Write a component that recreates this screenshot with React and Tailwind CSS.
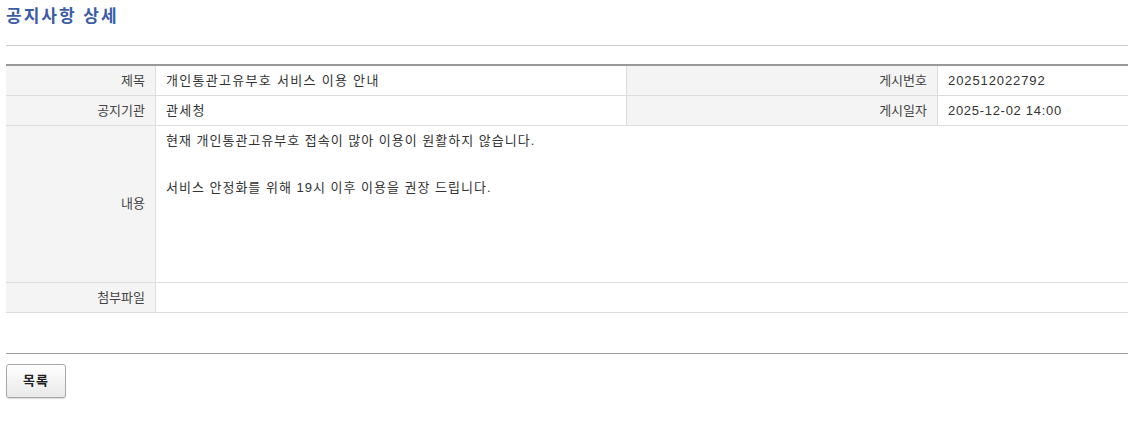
import React from 'react';

const font = { fontFamily: '"Liberation Sans", "Noto Sans CJK KR", sans-serif' };

const Label = ({ children, className = '' }) => (
    <div
        className={`bg-[#f4f4f4] text-right pr-[10px] text-[13px] text-[#444] border-r border-[#dddddd] flex items-center justify-end ${className}`}
    >
        {children}
    </div>
);

const Value = ({ children, className = '' }) => (
    <div className={`pl-[10px] text-[13px] text-[#333] flex items-center ${className}`}>
        {children}
    </div>
);

export default function App() {
    return (
        <div className="bg-white w-[1128px] h-[443px] pl-[6px]" style={font}>
            <h2 className="pt-[6px] h-[46px] text-[17px] font-bold tracking-[2px] text-[#3b5ca6] leading-[22px] border-b border-[#cccccc]">
                공지사항 상세
            </h2>

            <div className="mt-[18px] border-t-2 border-[#999999]">
                <div className="grid grid-cols-[150px_471px_311px_1fr] h-[30px] border-b border-[#dddddd]">
                    <Label>제목</Label>
                    <Value className="border-r border-[#dddddd] tracking-[1.3px]">
                        개인통관고유부호 서비스 이용 안내
                    </Value>
                    <Label>게시번호</Label>
                    <Value className="tracking-[0.9px]">202512022792</Value>
                </div>
                <div className="grid grid-cols-[150px_471px_311px_1fr] h-[30px] border-b border-[#dddddd]">
                    <Label>공지기관</Label>
                    <Value className="border-r border-[#dddddd] tracking-[1.3px]">관세청</Value>
                    <Label>게시일자</Label>
                    <Value className="tracking-[0.7px]">2025-12-02 14:00</Value>
                </div>
                <div className="grid grid-cols-[150px_1fr] h-[157px] border-b border-[#dddddd]">
                    <Label>내용</Label>
                    <div className="pl-[10px] pt-[3px] text-[13px] text-[#333] leading-[23.5px] tracking-[1px]">
                        <p>현재 개인통관고유부호 접속이 많아 이용이 원활하지 않습니다.</p>
                        <p>&nbsp;</p>
                        <p>서비스 안정화를 위해 19시 이후 이용을 권장 드립니다.</p>
                    </div>
                </div>
                <div className="grid grid-cols-[150px_1fr] h-[30px] border-b border-[#dddddd]">
                    <Label>첨부파일</Label>
                    <Value />
                </div>
            </div>

            <div className="mt-[40px] border-t border-[#999999] pt-[10px]">
                <button className="w-[60px] h-[34px] rounded-[3px] border border-[#a8a8a8] bg-gradient-to-b from-white to-[#e9e9e9] shadow-[0_1px_1px_rgba(0,0,0,0.15)] text-[13px] font-bold tracking-[1px] text-[#222]">
                    목록
                </button>
            </div>
        </div>
    );
}
